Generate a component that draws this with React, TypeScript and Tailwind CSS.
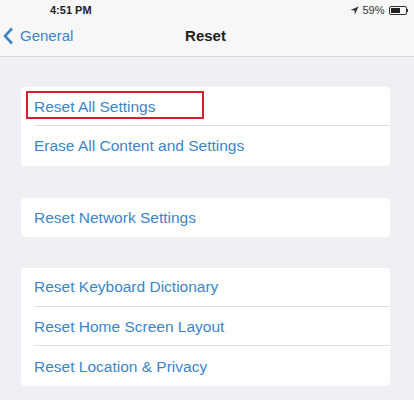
import React from 'react'

const font = { fontFamily: '"Liberation Sans", Arial, sans-serif' }

const Row: React.FC<{ label: string; last?: boolean; boxed?: boolean }> = ({ label, last, boxed }) => (
  <div className="relative pl-[13px]">
    <div className={`h-[39.3px] flex items-center ${last ? '' : 'border-b border-[#e0e0e4]'}`}>
      <span className="text-[15.5px] text-[#3b86c8]">{label}</span>
    </div>
    {boxed && (
      <div className="absolute left-[5px] top-[4px] w-[178px] h-[28px] border-2 border-[#d3212e]" />
    )}
  </div>
)

const Card: React.FC<{ children: React.ReactNode }> = ({ children }) => (
  <div className="mx-[21px] w-[369px] bg-white rounded-[4px]">{children}</div>
)

export default function App() {
  return (
    <div className="w-[414px] h-[400px] bg-[#efeff4] overflow-hidden" style={font}>
      {/* Status bar + nav */}
      <div className="bg-[#f7f7f8] border-b border-[#d6d6da]">
        <div className="h-[20px] flex items-center justify-between pl-[50px] pr-[6px]">
          <span className="text-[11px] font-bold text-[#222]">4:51 PM</span>
          <div className="flex items-center gap-[3px]">
            <svg width="9" height="9" viewBox="0 0 10 10">
              <path d="M9.5 0.5 L0.5 4.5 L5 5 L5.5 9.5 Z" fill="#333" />
            </svg>
            <span className="text-[11px] text-[#333]">59%</span>
            <div className="flex items-center ml-[1px]">
              <div className="w-[18px] h-[9px] border border-[#333] rounded-[2px] p-[1px]">
                <div className="w-[9px] h-full bg-[#222]" />
              </div>
              <div className="w-[1.5px] h-[3px] bg-[#333]" />
            </div>
          </div>
        </div>
        <div className="h-[36px] pb-[4px] flex items-center relative">
          <div className="flex items-center pl-[3px] gap-[6px]">
            <svg width="11" height="18" viewBox="0 0 11 18">
              <path d="M9 1.5 L2 9 L9 16.5" stroke="#3b86c8" strokeWidth="2.6" fill="none" />
            </svg>
            <span className="text-[15px] text-[#3b86c8]">General</span>
          </div>
          <span className="absolute left-0 right-0 pr-[3px] text-center text-[15px] font-bold text-[#222] pointer-events-none">
            Reset
          </span>
        </div>
      </div>

      <div className="pt-[30px] flex flex-col">
        <Card>
          <Row label="Reset All Settings" boxed />
          <Row label="Erase All Content and Settings" last />
        </Card>
        <div className="h-[32px]" />
        <Card>
          <Row label="Reset Network Settings" last />
        </Card>
        <div className="h-[31px]" />
        <Card>
          <Row label="Reset Keyboard Dictionary" />
          <Row label="Reset Home Screen Layout" />
          <Row label="Reset Location & Privacy" last />
        </Card>
      </div>
    </div>
  )
}
